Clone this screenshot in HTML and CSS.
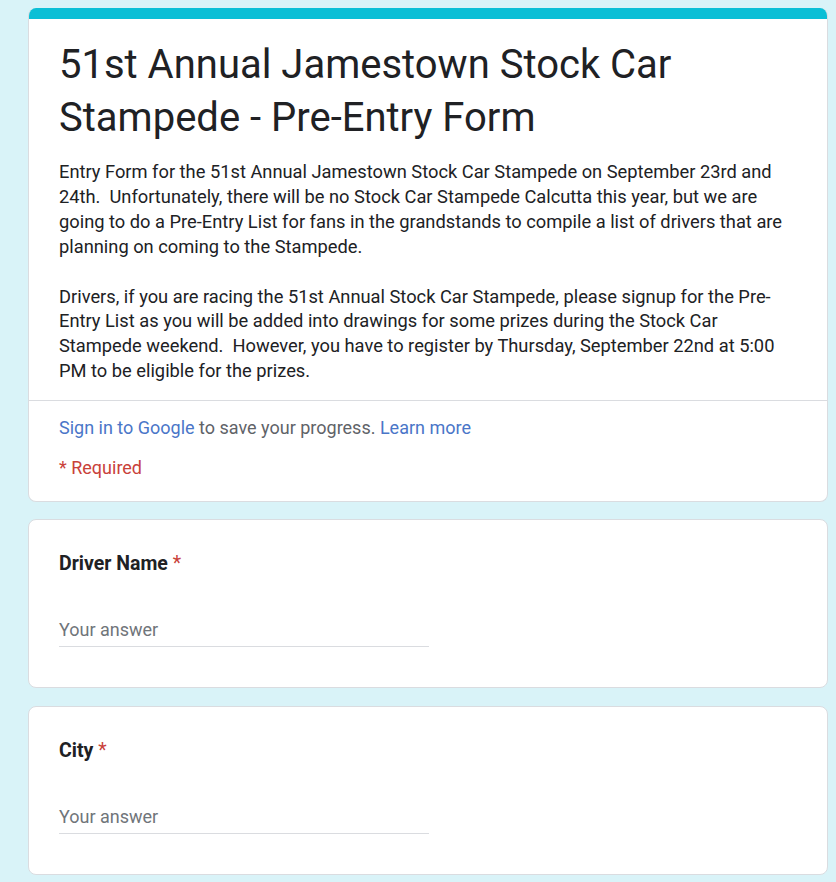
FILE: index.html
```html
<!DOCTYPE html>
<html lang="en">
<head>
<meta charset="utf-8">
<title>51st Annual Jamestown Stock Car Stampede - Pre-Entry Form</title>
<link rel="stylesheet" href="styles.css">
</head>
<body>
<main class="form">
  <section class="card header-card">
    <div class="accent"></div>
    <div class="header-body">
      <h1 class="title">51st Annual Jamestown Stock Car<br>Stampede - Pre-Entry Form</h1>
      <div class="desc">Entry Form for the 51st Annual Jamestown Stock Car Stampede on September 23rd and<br>24th.  Unfortunately, there will be no Stock Car Stampede Calcutta this year, but we are<br>going to do a Pre-Entry List for fans in the grandstands to compile a list of drivers that are<br>planning on coming to the Stampede.<br><br>Drivers, if you are racing the 51st Annual Stock Car Stampede, please signup for the Pre-<br>Entry List as you will be added into drawings for some prizes during the Stock Car<br>Stampede weekend.  However, you have to register by Thursday, September 22nd at 5:00<br>PM to be eligible for the prizes.</div>
    </div>
    <div class="header-foot">
      <div class="signin"><a class="link">Sign in to Google</a> to save your progress. <a class="link">Learn more</a></div>
      <div class="required">* Required</div>
    </div>
  </section>

  <section class="card question">
    <div class="label">Driver Name <span class="star">*</span></div>
    <div class="answer">Your answer</div>
  </section>

  <section class="card question">
    <div class="label">City <span class="star">*</span></div>
    <div class="answer">Your answer</div>
  </section>
</main>
</body>
</html>
```

FILE: styles.css
```css
html, body {
  margin: 0;
  padding: 0;
}
body {
  background: #d9f3f8;
  font-family: Roboto, "Liberation Sans", Arial, sans-serif;
  color: #202124;
}
.form {
  width: 800px;
  padding: 8px 0 0 28px;
  display: flex;
  flex-direction: column;
  gap: 17px;
}
.card {
  background: #fff;
  border: 1px solid #dadce0;
  border-radius: 8px;
  box-sizing: border-box;
  overflow: hidden;
}
.header-card {
  border-top: none;
}
.accent {
  height: 11px;
  background: #0bbfd6;
}
.header-body {
  padding: 19px 30px 16px 30px;
  border-bottom: 1px solid #dadce0;
}
.title {
  margin: 0 0 16px 0;
  font-size: 40px;
  line-height: 53px;
  font-weight: 400;
  color: #202124;
}
.desc {
  font-size: 18.3px;
  line-height: 24.9px;
  white-space: pre-wrap;
  color: #202124;
}
.header-foot {
  padding: 14px 30px 21px 30px;
  display: flex;
  flex-direction: column;
  gap: 15px;
  font-size: 18px;
  line-height: 25px;
}
.signin {
  color: #5f6368;
}
.link {
  color: #4a76c8;
  text-decoration: none;
}
.required {
  color: #c9413a;
}
.question {
  padding: 32px 30px 40px 30px;
}
.question + .question {
  margin-top: 1px;
}
.label {
  font-size: 19.5px;
  line-height: 24px;
  font-weight: 700;
  color: #202124;
}
.star {
  color: #c9413a;
  font-weight: 400;
}
.answer {
  margin-top: 42px;
  width: 370px;
  font-size: 18px;
  line-height: 24px;
  color: #70757a;
  padding-bottom: 4px;
  border-bottom: 1px solid #dadce0;
}
```
